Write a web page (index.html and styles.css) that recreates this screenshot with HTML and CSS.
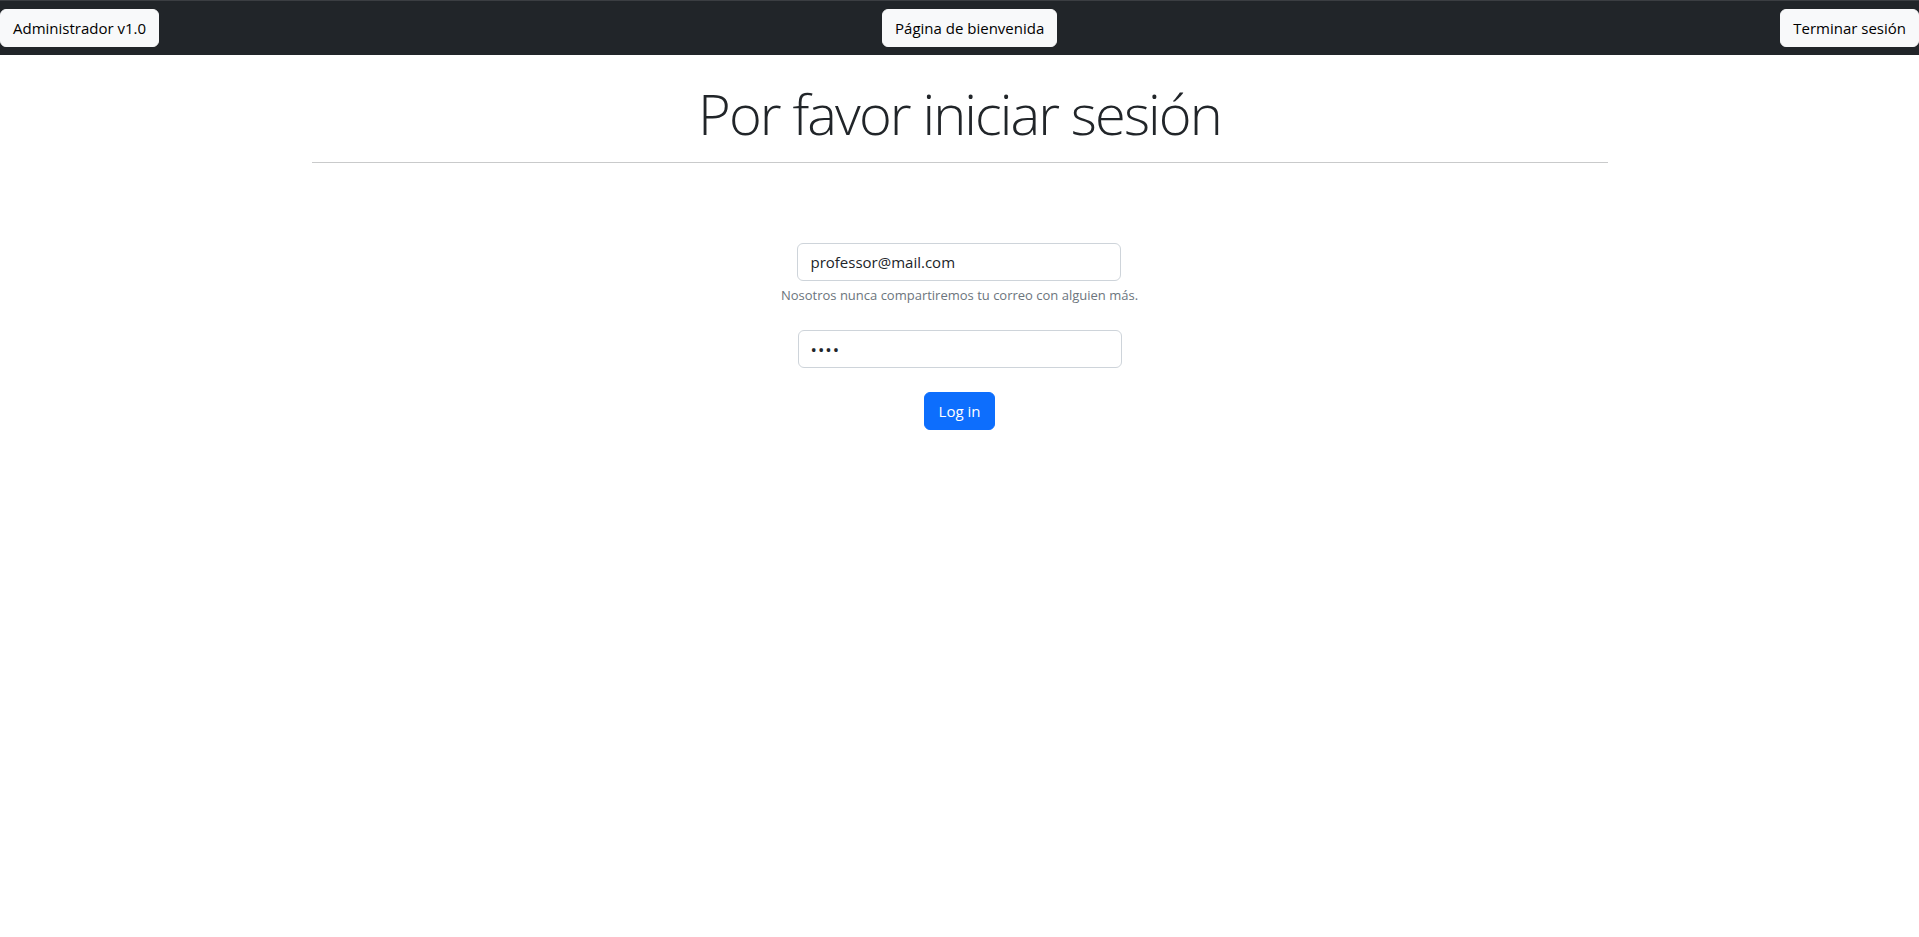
FILE: index.html
```html
<!DOCTYPE html>
<html lang="es">
<head>
<meta charset="utf-8">
<title>Iniciar sesión</title>
<link rel="stylesheet" href="styles.css">
</head>
<body>
<nav class="topbar">
  <a class="btn btn-light" href="#">Administrador v1.0</a>
  <a class="btn btn-light" href="#">Página de bienvenida</a>
  <a class="btn btn-light" href="#">Terminar sesión</a>
</nav>
<main class="container">
  <h1 class="title">Por favor iniciar sesión</h1>
  <hr class="divider">
  <form class="login">
    <div class="group">
      <input class="field" type="email" value="professor@mail.com">
      <div class="help">Nosotros nunca compartiremos tu correo con alguien más.</div>
    </div>
    <div class="group">
      <input class="field" type="password" value="abcd">
    </div>
    <button class="btn btn-primary btn-login" type="button">Log in</button>
  </form>
</main>
</body>
</html>
```
FILE: styles.css
```css
* { box-sizing: border-box; }
html, body { margin: 0; padding: 0; }
body {
  font-family: "Open Sans", "Noto Sans", sans-serif;
  font-size: 15px;
  color: #212529;
  background: #fff;
}
.topbar {
  display: flex;
  justify-content: space-between;
  align-items: center;
  background: #212529;
  border-top: 1px solid #3b3e42;
  padding: 8px 0 8px;
}
.btn {
  display: inline-flex;
  align-items: center;
  justify-content: center;
  height: 38px;
  padding: 0 12px;
  border-radius: 6px;
  border: 1px solid transparent;
  font-family: inherit;
  font-size: 15px;
  text-decoration: none;
  cursor: pointer;
}
.btn-light { background: #f8f9fa; color: #000; border-color: #f8f9fa; }
.btn-primary { background: #0d6efd; color: #fff; border-color: #0d6efd; }
.btn-login { padding: 0 14px; }
.container {
  width: 1296px;
  margin: 0 auto;
  text-align: center;
}
.title {
  font-size: 56px;
  font-weight: 300;
  line-height: 67px;
  margin: 25px 0 15px;
  letter-spacing: -1.9px;
}
.divider {
  margin: 0;
  border: 0;
  border-top: 1px solid #c9cacb;
}
.login {
  margin-top: 80px;
  display: flex;
  flex-direction: column;
  align-items: center;
}
.group {
  display: flex;
  flex-direction: column;
  align-items: center;
  margin-bottom: 24px;
}
.field {
  width: 324px;
  height: 38px;
  padding: 6px 12px;
  border: 1px solid #ced4da;
  border-radius: 6px;
  font-family: inherit;
  font-size: 15px;
  color: #212529;
  background: #fff;
}
.field[type="password"] { font-size: 17px; letter-spacing: 1px; }
.help {
  margin-top: 4px;
  font-size: 13px;
  line-height: 21px;
  color: #6c757d;
}
```
